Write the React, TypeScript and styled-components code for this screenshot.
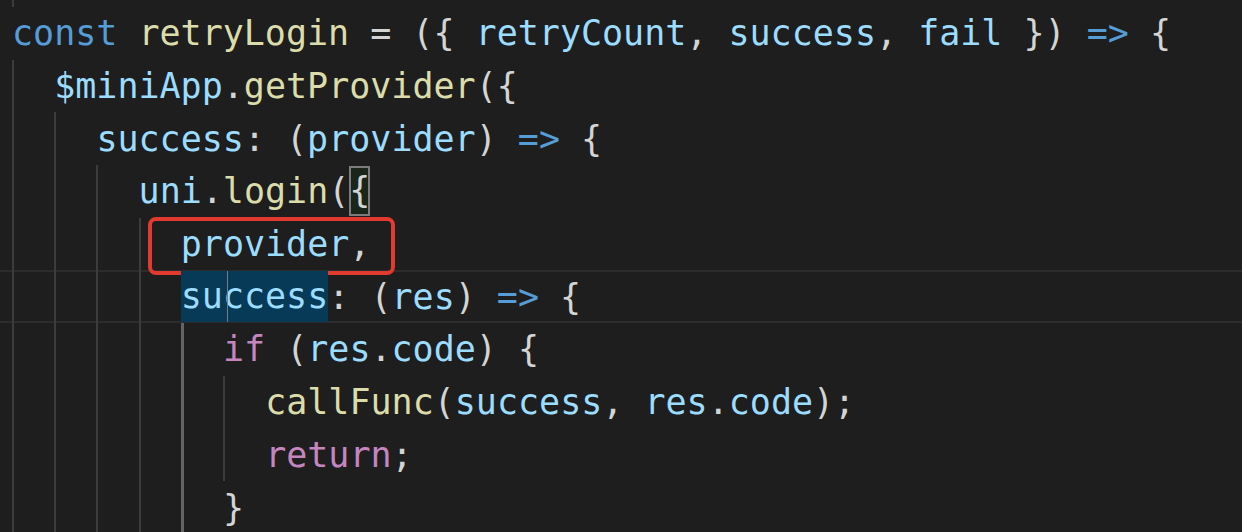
import React from "react";
import styled, { createGlobalStyle, css } from "styled-components";

const GlobalStyle = createGlobalStyle`
  html, body { margin: 0; padding: 0; background: #1e1e1e; }
`;

type Kind = "kw" | "fn" | "p" | "v" | "ctrl";

const COLORS: Record<Kind, string> = {
  kw: "#569cd6",
  fn: "#dcdcaa",
  p: "#d4d4d4",
  v: "#9cdcfe",
  ctrl: "#c586c0",
};

const Editor = styled.div`
  width: 1242px;
  height: 532px;
  overflow: hidden;
  background: #1e1e1e;
  font-family: "DejaVu Sans Mono", "Liberation Mono", monospace;
  font-size: 35px;
`;

const Code = styled.div`
  display: flex;
  flex-direction: column;
  margin-top: -45.7px;
`;

const Row = styled.div<{ $current?: boolean }>`
  display: flex;
  align-items: center;
  height: 52.7px;
  padding-left: 12px;
  white-space: pre;
  flex: none;
  ${(p) =>
    p.$current &&
    css`
      box-shadow: inset 0 2px 0 #2c2c2c, inset 0 -2px 0 #2c2c2c;
    `}
`;

const Guide = styled.span<{ $active?: boolean }>`
  flex: none;
  align-self: stretch;
  width: 42.2px;
  box-sizing: border-box;
  border-left: ${(p) => (p.$active ? "3px solid #646464" : "2px solid #3c3c3c")};
`;

const Tok = styled.span<{ $kind: Kind }>`
  color: ${(p) => COLORS[p.$kind]};
`;

const BracketMatch = styled.span`
  display: inline-block;
  color: #d4d4d4;
  background: rgba(0, 100, 0, 0.12);
  box-shadow: inset 0 0 0 2px #7c7c7c;
  line-height: 49px;
  height: 50px;
`;

const WordHighlight = styled.span`
  position: relative;
  display: inline-block;
  color: #9cdcfe;
  background: #073a56;
  line-height: 51px;
  height: 51px;

  &::after {
    content: "";
    position: absolute;
    left: 46px;
    top: 0;
    bottom: 0;
    width: 1px;
    background: #7a7a7a;
  }
`;

const Callout = styled.span`
  position: relative;
  color: #9cdcfe;

  &::after {
    content: "";
    position: absolute;
    left: -33px;
    right: -25px;
    top: -7px;
    bottom: -11px;
    border: 4px solid #e23a2e;
    border-radius: 8px;
  }
`;

type Seg = [string, Kind];

const T = ({ segs }: { segs: Seg[] }) => (
  <>
    {segs.map(([t, k], i) => (
      <Tok key={i} $kind={k}>
        {t}
      </Tok>
    ))}
  </>
);

const Guides = ({ n, active }: { n: number; active?: number }) => (
  <>
    {Array.from({ length: n }).map((_, i) => (
      <Guide key={i} $active={active === i} />
    ))}
  </>
);

export default function App() {
  return (
    <>
      <GlobalStyle />
      <Editor>
        <Code>
          <Row>
            <Guides n={1} />
          </Row>
          <Row>
            <T
              segs={[
                ["const", "kw"],
                [" ", "p"],
                ["retryLogin", "fn"],
                [" = ({ ", "p"],
                ["retryCount", "v"],
                [", ", "p"],
                ["success", "v"],
                [", ", "p"],
                ["fail", "v"],
                [" }) ", "p"],
                ["=>", "kw"],
                [" {", "p"],
              ]}
            />
          </Row>
          <Row>
            <Guides n={1} />
            <T
              segs={[
                ["$miniApp", "v"],
                [".", "p"],
                ["getProvider", "fn"],
                ["({", "p"],
              ]}
            />
          </Row>
          <Row>
            <Guides n={2} />
            <T
              segs={[
                ["success", "v"],
                [": (", "p"],
                ["provider", "v"],
                [") ", "p"],
                ["=>", "kw"],
                [" {", "p"],
              ]}
            />
          </Row>
          <Row>
            <Guides n={3} />
            <T
              segs={[
                ["uni", "v"],
                [".", "p"],
                ["login", "fn"],
                ["(", "p"],
              ]}
            />
            <BracketMatch>{"{"}</BracketMatch>
          </Row>
          <Row>
            <Guides n={4} />
            <Callout>
              provider<Tok $kind="p">,</Tok>
            </Callout>
          </Row>
          <Row $current>
            <Guides n={4} />
            <WordHighlight>success</WordHighlight>
            <T
              segs={[
                [": (", "p"],
                ["res", "v"],
                [") ", "p"],
                ["=>", "kw"],
                [" {", "p"],
              ]}
            />
          </Row>
          <Row>
            <Guides n={5} active={4} />
            <T
              segs={[
                ["if", "ctrl"],
                [" (", "p"],
                ["res", "v"],
                [".", "p"],
                ["code", "v"],
                [") {", "p"],
              ]}
            />
          </Row>
          <Row>
            <Guides n={6} active={4} />
            <T
              segs={[
                ["callFunc", "fn"],
                ["(", "p"],
                ["success", "v"],
                [", ", "p"],
                ["res", "v"],
                [".", "p"],
                ["code", "v"],
                [");", "p"],
              ]}
            />
          </Row>
          <Row>
            <Guides n={6} active={4} />
            <T
              segs={[
                ["return", "ctrl"],
                [";", "p"],
              ]}
            />
          </Row>
          <Row>
            <Guides n={5} active={4} />
            <T segs={[["}", "p"]]} />
          </Row>
        </Code>
      </Editor>
    </>
  );
}
